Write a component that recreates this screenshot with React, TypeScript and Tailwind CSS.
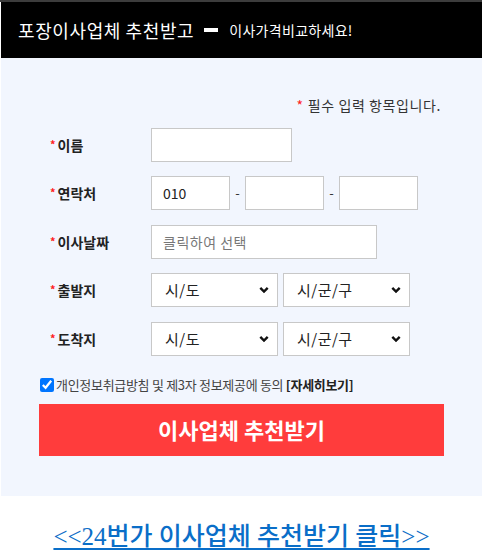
const font = "font-['Noto_Sans_CJK_KR','Noto_Sans',sans-serif]"

function Chevron() {
  return (
    <svg width="10" height="7" viewBox="0 0 10 7" className="absolute right-[9px] top-1/2 -translate-y-1/2 pointer-events-none">
      <path d="M1.3 1.3 L5 5 L8.7 1.3" fill="none" stroke="#111" strokeWidth="2.4" />
    </svg>
  )
}

function Select({ label, w }: { label: string; w: string }) {
  return (
    <div className={`relative ${w} h-[34px]`}>
      <select className="w-full h-full appearance-none bg-white border border-[#c8c8c8] pl-[13px] text-[15px] tracking-[0.5px] text-[#222] outline-none">
        <option>{label}</option>
      </select>
      <Chevron />
    </div>
  )
}

function Label({ text }: { text: string }) {
  return (
    <div className="w-[150px] shrink-0 whitespace-nowrap pl-[49px] flex items-center text-[14px] font-bold text-[#222]">
      <span className="text-[#ff2020] text-[11px] mr-[2px] -mt-[2px]">*</span>
      {text}
    </div>
  )
}

const inputCls = "h-[34px] bg-white border border-[#c8c8c8] px-[11px] text-[14px] text-[#222] outline-none"

export default function App() {
  return (
    <div className={`w-[482px] h-[557px] bg-white ${font}`}>
      <div className="h-[2px] bg-[#3c3c3c]" />
      <div className="ml-[1px]">
        {/* 헤더 */}
        <div className="h-[56px] bg-black flex items-center pl-[17px] text-white">
          <span className="text-[18px] tracking-[0.6px]">포장이사업체 추천받고</span>
          <span className="w-[14px] h-[4px] bg-white ml-[10px] mr-[11px]" />
          <span className="text-[14px] tracking-[0.3px]">이사가격비교하세요!</span>
        </div>

        {/* 폼 */}
        <div className="bg-[#f2f6fe] h-[438px] pt-[37px]">
          <p className="text-right pr-[41px] text-[14px] tracking-[0.6px] text-[#333] leading-[20px]">
            <span className="text-[#ff2020] mr-[4px]">*</span>필수 입력 항목입니다.
          </p>

          <div className="mt-[13px] flex flex-col">
            <div className="flex">
              <Label text="이름" />
              <input className={`${inputCls} w-[141px]`} />
            </div>
            <div className="flex mt-[14px]">
              <Label text="연락처" />
              <div className="flex items-center">
                <input className={`${inputCls} w-[79px]`} defaultValue="010" />
                <span className="w-[15px] text-center text-[13px] text-[#333]">-</span>
                <input className={`${inputCls} w-[79px]`} />
                <span className="w-[15px] text-center text-[13px] text-[#333]">-</span>
                <input className={`${inputCls} w-[79px]`} />
              </div>
            </div>
            <div className="flex mt-[15px]">
              <Label text="이사날짜" />
              <input className={`${inputCls} w-[226px] tracking-[0.5px] placeholder:text-[#777]`} placeholder="클릭하여 선택" />
            </div>
            <div className="flex mt-[14px]">
              <Label text="출발지" />
              <div className="flex gap-[5px]">
                <Select label="시/도" w="w-[127px]" />
                <Select label="시/군/구" w="w-[127px]" />
              </div>
            </div>
            <div className="flex mt-[15px]">
              <Label text="도착지" />
              <div className="flex gap-[5px]">
                <Select label="시/도" w="w-[127px]" />
                <Select label="시/군/구" w="w-[127px]" />
              </div>
            </div>
          </div>

          <label className="mt-[19px] ml-[39px] flex items-center text-[13px] text-[#444] tracking-[-0.3px]">
            <input type="checkbox" defaultChecked className="w-[14px] h-[14px] m-0 mr-[2px] accent-[#0075ff]" />
            개인정보취급방침 및 제3자 정보제공에 동의&nbsp;<b className="text-[#222]">[자세히보기]</b>
          </label>

          <button className="mt-[9px] ml-[38px] w-[405px] h-[52px] bg-[#ff3c3c] text-white text-[22px] font-bold">
            이사업체 추천받기
          </button>
        </div>

        {/* 링크 */}
        <div className="pt-[22px] text-center">
          <a href="#" className="font-['Liberation_Serif','Noto_Sans_CJK_KR',serif] text-[25px] font-medium text-[#0a6ec8] underline underline-offset-[3px] decoration-[2px]">
            &lt;&lt;24번가 이사업체 추천받기 클릭&gt;&gt;
          </a>
        </div>
      </div>
    </div>
  )
}
